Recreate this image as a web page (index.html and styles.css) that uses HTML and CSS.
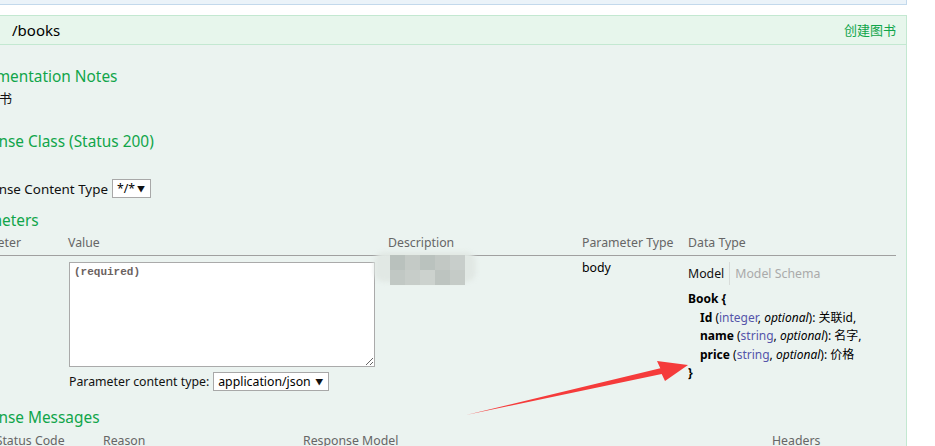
FILE: index.html
```html
<!DOCTYPE html>
<html lang="zh-CN">
<head>
<meta charset="utf-8">
<title>/books</title>
<link rel="stylesheet" href="styles.css">
</head>
<body>
<div class="page">
  <div class="wrap">
    <div class="prev-content"></div>
    <div class="op-heading">
      <div class="heading-left"><span class="method">post</span><span class="path">/books</span></div>
      <span class="summary">创建图书</span>
    </div>
    <div class="op-content">
      <h4 class="h-impl">Implementation Notes</h4>
      <p class="notes">创建图书</p>
      <h4 class="h-class">Response Class (Status 200)</h4>
      <div class="rct">
        <span class="rct-label">Response Content Type</span>
        <span class="select select-small"><span>*/*</span><span class="caret">▼</span></span>
      </div>
      <h4 class="h-params">Parameters</h4>
      <div class="ptable">
        <div class="prow phead">
          <div>Parameter</div><div>Value</div><div>Description</div><div>Parameter Type</div><div>Data Type</div>
        </div>
        <div class="prow pbody">
          <div class="c-name">book</div>
          <div class="c-value">
            <textarea class="body-input" placeholder="(required)"></textarea>
            <div class="pct">
              <span>Parameter content type:</span>
              <span class="select select-wide"><span>application/json</span><span class="caret">▼</span></span>
            </div>
          </div>
          <div class="c-desc">
            <div class="mosaic" aria-hidden="true">
              <div class="halo"></div>
              <div class="tiles">
                <i class="t1"></i><i class="t2"></i><i class="t3"></i><i class="t4"></i><i class="t5"></i>
                <i class="t6"></i><i class="t7"></i><i class="t8"></i><i class="t9"></i><i class="t10"></i>
              </div>
            </div>
          </div>
          <div class="c-type">body</div>
          <div class="c-data">
            <div class="model-tabs"><span class="tab active">Model</span><span class="tab">Model Schema</span></div>
            <div class="model">
              <div class="m-line"><b>Book {</b></div>
              <div class="m-line m-prop"><b>Id</b> (<span class="ptype">integer</span>, <i>optional</i>): 关联id,</div>
              <div class="m-line m-prop"><b>name</b> (<span class="ptype">string</span>, <i>optional</i>): 名字,</div>
              <div class="m-line m-prop"><b>price</b> (<span class="ptype">string</span>, <i>optional</i>): 价格</div>
              <div class="m-line"><b>}</b></div>
            </div>
          </div>
        </div>
      </div>
      <h4 class="h-msgs">Response Messages</h4>
      <div class="mtable">
        <div class="mrow mhead">
          <div>HTTP Status Code</div><div>Reason</div><div>Response Model</div><div>Headers</div>
        </div>
      </div>
    </div>
  </div>
  <svg class="arrow" width="935" height="446" viewBox="0 0 935 446" aria-hidden="true">
    <polygon points="466,415 660.3,368.2 657,361 688,365 665,381 661.7,374" fill="#f53b3b"/>
  </svg>
</div>
</body>
</html>
```

FILE: styles.css
```css
html, body {
  margin: 0;
  padding: 0;
}
body {
  width: 935px;
  height: 446px;
  overflow: hidden;
  background: #ffffff;
  font-family: "Noto Sans", "Noto Sans CJK SC", sans-serif;
  font-size: 13px;
  line-height: 18px;
  color: #111;
}
.page {
  position: relative;
  width: 935px;
  height: 446px;
  overflow: hidden;
}
.wrap {
  margin-left: -80px;
  width: 987px;
}
.prev-content {
  box-sizing: border-box;
  height: 5px;
  background: #ebf3f9;
  border: 1px solid #c3d9ec;
  border-top: none;
}
.op-heading {
  box-sizing: border-box;
  margin-top: 10px;
  height: 30px;
  background: #e7f6ec;
  border: 1px solid #c3e8d1;
  display: flex;
  align-items: center;
  justify-content: space-between;
  padding-right: 10px;
}
.heading-left {
  display: flex;
  align-items: center;
}
.method {
  display: inline-block;
  width: 50px;
  text-align: center;
  background: #10a54a;
  color: #fff;
  font-size: 11px;
  text-transform: uppercase;
  margin-right: 41px;
}
.path {
  font-size: 15px;
  line-height: 28px;
  color: #000;
}
.summary {
  color: #10a54a;
  font-size: 13px;
}
.op-content {
  box-sizing: border-box;
  height: 420px;
  background: #ebf3f0;
  border: 1px solid #c3e8d1;
  border-top: none;
  padding: 0 10px 0 39px;
}
h4 {
  margin: 0 0 0 -6px;
  font-size: 15.4px;
  line-height: 19px;
  font-weight: normal;
  color: #10a54a;
}
.h-impl { padding-top: 22px; }
.notes {
  margin: 3px 0 0;
  color: #111;
}
.h-class { margin-top: 25px; }
.rct {
  margin: 28px 0 0 0;
  height: 19px;
  display: flex;
  align-items: center;
  gap: 4px;
}
.rct-label {
  font-size: 13.4px;
  color: #111;
}
.select {
  box-sizing: border-box;
  display: inline-flex;
  align-items: center;
  justify-content: space-between;
  height: 19px;
  background: #fff;
  border: 1px solid #a8a8a8;
  padding: 0 5px 0 4px;
  color: #000;
  font-size: 12.3px;
  line-height: 17px;
}
.select-small { width: 39px; }
.select-wide { width: 116px; }
.caret {
  font-size: 8px;
  line-height: 17px;
  color: #111;
}
.h-params { margin-top: 13px; margin-left: -5px; }

.prow {
  display: grid;
  grid-template-columns: 108px 320px 194px 106px 1fr;
}
.phead {
  padding: 4px 0 3px;
  border-bottom: 1px solid #a0a0a0;
  color: #666;
  font-size: 12.3px;
}
.c-name {
  font-weight: bold;
  padding-top: 3px;
}
.c-value {
  padding: 6px 0 0 1px;
}
.body-input {
  display: block;
  box-sizing: border-box;
  width: 306px;
  height: 105px;
  margin: 0;
  border: 1px solid #aaaaaa;
  background: #fff;
  padding: 3px 4px;
  font-family: "Liberation Mono", monospace;
  font-size: 11px;
  font-weight: bold;
  line-height: 13px;
}
.body-input::placeholder {
  color: #6b625f;
}
.pct {
  margin-top: 5px;
  height: 19px;
  display: flex;
  align-items: center;
  gap: 4px;
  color: #111;
  font-size: 12.3px;
}
.c-desc {
  position: relative;
}
.mosaic {
  position: absolute;
  left: -16px;
  top: -6px;
  width: 108px;
  height: 36px;
}
.halo {
  position: absolute;
  left: 2px;
  top: 2px;
  width: 102px;
  height: 30px;
  background: #e1e8e4;
  border-radius: 10px;
  filter: blur(2px);
}
.tiles {
  position: absolute;
  left: 18px;
  top: 5px;
  width: 75px;
  display: grid;
  grid-template-columns: repeat(5, 15px);
  grid-auto-rows: 15px;
}
.tiles i { display: block; }
.t1 { background: #b9c1bd; }
.t2 { background: #c4cac6; }
.t3 { background: #bac2be; }
.t4 { background: #c2c8c4; }
.t5 { background: #c8cecb; }
.t6 { background: #c1c8c4; }
.t7 { background: #c7cdc9; }
.t8 { background: #ccd2ce; }
.t9 { background: #bdc4c0; }
.t10 { background: #c5cbc7; }
.c-type {
  padding-top: 3px;
  color: #000;
  font-size: 12.3px;
}
.c-data {
  padding-top: 6px;
}
.model-tabs {
  display: flex;
  height: 23px;
  align-items: flex-start;
  font-size: 12.3px;
}
.tab {
  padding-top: 3px;
  line-height: 18px;
  color: #aaa;
}
.tab.active {
  color: #111;
  padding-right: 5px;
  border-right: 1px solid #d8dcda;
  height: 20px;
}
.tab + .tab {
  padding-left: 5px;
}
.model {
  margin-top: 5px;
  font-size: 12px;
  line-height: 18.5px;
  color: #000;
}
.m-prop {
  padding-left: 12px;
}
.ptype { color: #5555aa; }
.h-msgs { margin-top: 17px; }
.mrow {
  display: grid;
  grid-template-columns: 141px 200px 469px 1fr;
}
.mhead {
  padding: 5px 0 0 2px;
  color: #666;
  font-size: 12.3px;
}
.arrow {
  position: absolute;
  left: 0;
  top: 0;
  pointer-events: none;
}
```
